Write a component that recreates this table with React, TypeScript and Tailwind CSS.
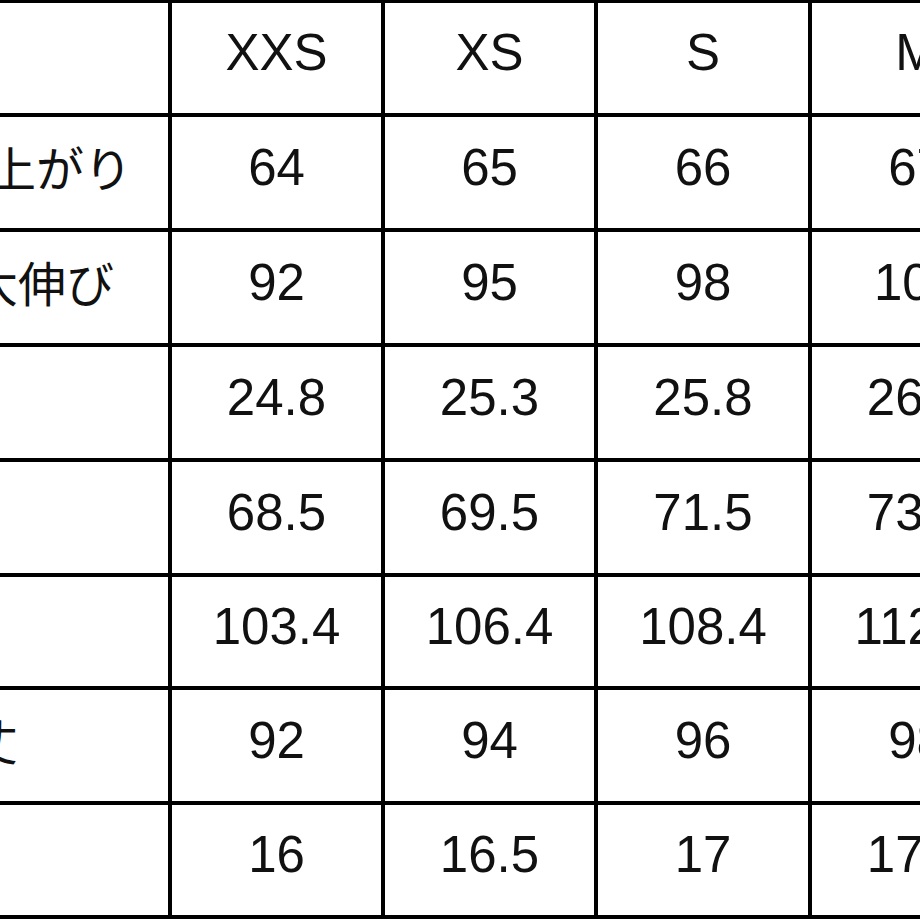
const sizes = ['XXS', 'XS', 'S', 'M'];

type Row = { label: string; pad: string; values: string[]; h: string };

const rows: Row[] = [
  { label: '仕上がり', pad: 'pr-[36px]', values: ['64', '65', '66', '67'], h: 'h-[115px]' },
  { label: '最大伸び', pad: 'pr-[54px]', values: ['92', '95', '98', '101'], h: 'h-[115px]' },
  { label: '股上', pad: 'pr-[220px]', values: ['24.8', '25.3', '25.8', '26.3'], h: 'h-[115px]' },
  { label: '股下', pad: 'pr-[220px]', values: ['68.5', '69.5', '71.5', '73.5'], h: 'h-[115px]' },
  { label: 'ヒップ', pad: 'pr-[220px]', values: ['103.4', '106.4', '108.4', '112.4'], h: 'h-[113px]' },
  { label: '着丈', pad: 'pr-[150px]', values: ['92', '94', '96', '98'], h: 'h-[115px]' },
  { label: '裾幅', pad: 'pr-[220px]', values: ['16', '16.5', '17', '17.5'], h: 'h-[114px]' },
];

const cell = 'flex items-center justify-center border-r-4 border-black pb-[11px] shrink-0';

export default function App() {
  return (
    <div className="w-[920px] h-[920px] overflow-hidden bg-white text-[#111]">
      {/* table runs off the left edge: the label column is only partly visible */}
      <div className="ml-[-300px] mt-[-1px] border-t-4 border-black font-['Liberation_Sans','Noto_Sans_CJK_JP',sans-serif] text-[51px] leading-none">
        <div className="flex h-[114px] border-b-4 border-black">
          <div className="w-[472px] border-r-4 border-black shrink-0" />
          {sizes.map((s, i) => (
            <div key={s} className={`${cell} ${i === 2 ? 'w-[214px]' : 'w-[213px]'}`}>
              {s}
            </div>
          ))}
        </div>

        {rows.map((r) => (
          <div key={r.label} className={`flex ${r.h} border-b-4 border-black`}>
            <div
              className={`w-[472px] shrink-0 flex items-center justify-end border-r-4 border-black pb-[13px] ${r.pad}`}
            >
              <span className="whitespace-nowrap font-['Noto_Sans_CJK_JP',sans-serif] text-[48px]">{r.label}</span>
            </div>
            {r.values.map((v, i) => (
              <div key={i} className={`${cell} ${i === 2 ? 'w-[214px]' : 'w-[213px]'}`}>
                {v}
              </div>
            ))}
          </div>
        ))}
      </div>
    </div>
  );
}
